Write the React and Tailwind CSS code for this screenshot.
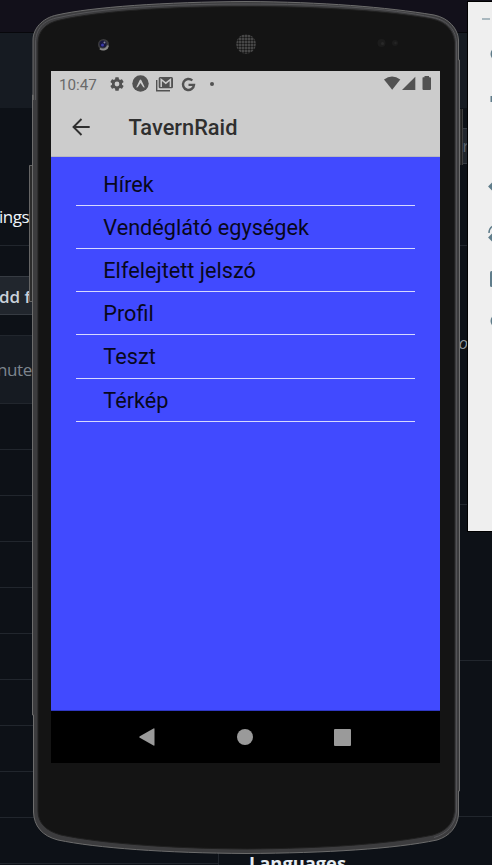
import React from "react";

const items = ["Hírek", "Vendéglátó egységek", "Elfelejtett jelszó", "Profil", "Teszt", "Térkép"];

function Backdrop() {
  return (
    <div className="flex h-[865px] flex-col bg-[#0d1117] font-['Noto_Sans',sans-serif]">
      <div className="h-[33px] shrink-0 border-b border-[#07070b] bg-[#12101a]" />
      <div className="h-[75px] shrink-0 bg-[#161b22]" />
      <div className="flex min-h-0 flex-1">
        <div className="flex w-[219px] shrink-0 flex-col border-r border-[#21262d]">
          <div className="flex h-[138px] shrink-0 items-end border-b border-[#21262d] pb-4">
            <span className="-ml-[1px] font-['Open_Sans',sans-serif] text-[17px] tracking-[-0.5px] leading-6 text-[#f0f6fc]">ings</span>
          </div>
          <div className="mt-[30px] h-[39px] shrink-0 border-y border-[#363b42] bg-[#21262d] pt-[8px]">
            <span className="-ml-[1px] block font-['Open_Sans',sans-serif] text-[17px] font-semibold leading-6 text-[#c9d1d9]">dd f</span>
          </div>
          <div className="mt-5 h-[69px] shrink-0 border-y border-[#21262d] bg-[#161b22] pt-[22px]">
            <span className="-ml-[3px] block font-['Open_Sans',sans-serif] text-[17px] tracking-[-0.4px] leading-6 text-[#7d858e]">nute</span>
          </div>
          {Array.from({ length: 10 }, (_, i) => (
            <div key={i} className="h-[46px] shrink-0 border-b border-[#21262d]" />
          ))}
        </div>
        <div className="flex flex-1 flex-col">
          <div className="h-[20px] shrink-0" />
          <div className="flex h-[36px] shrink-0 items-center justify-end border-y border-[#363b42] bg-[#21262d] pr-[23px] text-[16px] text-[#59616a]">r</div>
          <div className="h-[82px] shrink-0 border-b border-[#21262d]" />
          <div className="flex h-[259px] shrink-0 justify-end border-b border-[#21262d] pr-[24px] pt-[85px]">
            <span className="font-['Open_Sans',sans-serif] text-[17px] italic leading-6 text-[#8b949e]">o</span>
          </div>
          <div className="h-[156px] shrink-0 border-b border-[#21262d]" />
          <div className="h-[156px] shrink-0 border-b border-[#21262d]" />
          <div className="pl-[30px] pt-[34px] font-['Open_Sans',sans-serif] text-[18.3px] font-bold leading-6 text-[#e6edf3]">Languages</div>
        </div>
      </div>
    </div>
  );
}

function PhoneBody() {
  const outline =
    "M33 100V40C33 29 42 18 57 15C92 7 165 2 246 1.5C322 2 386 7 434 15C449 18 458 29 458.5 40V60H459.5V791H458.5V815C457 827 450 836 437 840C394 849 326 853 246 853.500C166 853 96 848 58 840C42 836 34 826 33.500 812V715H32.500V95H33Z";
  const face =
    "M38 100V43C38 32 45 23 60 20C100 11 170 6.500 246 6.500C322 6.500 390 11 432 19C447 22 454 32 454.500 43V811C453 824 446 831 433 835C390 844 324 848.500 246 849C168 848.500 99 843 61 835C46 831 38 823 38 811Z";
  return (
    <svg className="absolute inset-0" width="492" height="865" viewBox="0 0 492 865">
      <defs>
        <pattern id="mesh" width="3" height="3" patternUnits="userSpaceOnUse">
          <rect width="3" height="3" fill="#555" />
          <circle cx="1.500" cy="1.500" r="1.200" fill="#171717" />
        </pattern>
        <linearGradient id="key" x1="0" x2="1">
          <stop stopColor="#555" />
          <stop offset=".6" stopColor="#1c1c1c" />
          <stop offset="1" stopColor="#505050" />
        </linearGradient>
      </defs>
      <rect x="29" y="165" width="4" height="137" fill="#2b2b2b" />
      <path d="M33 165.500H29.500V301.500H33" fill="none" stroke="#656565" />
      <rect x="459" y="109" width="4" height="56" fill="url(#key)" />
      <path d={outline} fill="#3c3c3e" />
      <path d={outline} fill="none" stroke="#6c6c6c" strokeWidth="1" />
      <path d={face} fill="#141414" stroke="#202020" strokeWidth="1" />
      <path d="M35.500 100V42C36 29 43 20 59 17.500C100 8 170 4 246 4C322 4 390 8 433 17.500C449 21 456 31 456.500 43V812C455 825 447 834 434 837.500" fill="none" stroke="#555558" strokeWidth="1" />
      <circle cx="103.500" cy="44.500" r="5.500" fill="#3b3b3d" />
      <path d="M108 45.500a5 5 0 0 1-8 3" fill="none" stroke="#8a8a8a" strokeWidth="2" />
      <circle cx="103" cy="44" r="3.500" fill="#17173f" />
      <circle cx="102.500" cy="45" r="1.500" fill="#3a3aa8" />
      <circle cx="104.500" cy="42.500" r="1" fill="#889" />
      <circle cx="246" cy="44" r="9.800" fill="url(#mesh)" />
      <circle cx="381.500" cy="43" r="4" fill="#1c1c1c" />
      <circle cx="382.500" cy="43.500" r="1.500" fill="#292929" />
      <circle cx="395" cy="43" r="3" fill="#1c1c1c" />
      <circle cx="395.500" cy="43" r="1.200" fill="#252525" />
    </svg>
  );
}

function StatusBar() {
  return (
    <div className="flex h-[27px] items-center pl-[8px] pr-[8px] text-[#525252]">
      <span className="w-[51px] text-[15.2px] leading-[26px] text-[#696969]">10:47</span>
      <svg className="-mt-px" width="14" height="14" viewBox="2 2 20 20" fill="currentColor">
        <path d="M19.140 12.940c.04-.3.060-.61.060-.94s-.02-.64-.07-.94l2.030-1.580a.49.490 0 0 0 .12-.61l-1.920-3.320a.49.490 0 0 0-.59-.22l-2.390.96a7 7 0 0 0-1.620-.94l-.36-2.540A.48.480 0 0 0 13.920 2.400h-3.840a.48.480 0 0 0-.47.410l-.36 2.540a7 7 0 0 0-1.620.94l-2.390-.96a.48.480 0 0 0-.59.220L2.740 8.870a.48.480 0 0 0 .12.610l2.030 1.580a6 6 0 0 0 0 1.880l-2.030 1.580a.49.490 0 0 0-.12.610l1.920 3.320c.12.220.37.290.59.220l2.390-.96c.5.380 1.030.7 1.620.94l.36 2.540c.05.240.24.410.48.410h3.840c.24 0 .44-.17.470-.41l.36-2.540a7 7 0 0 0 1.620-.94l2.390.96c.22.080.47 0 .59-.22l1.920-3.320a.48.480 0 0 0-.12-.61ZM12 15.400a3.400 3.400 0 1 1 0-6.800 3.400 3.400 0 0 1 0 6.800Z" />
      </svg>
      <svg className="-mt-[2px] ml-[8px]" width="17" height="17" viewBox="0 0 17 17">
        <circle cx="8.500" cy="8.500" r="8.200" fill="currentColor" />
        <path d="M4.300 12.300 7.600 5.200Q8.500 3.700 9.400 5.200L12.700 12.300Q11.700 12.900 11 11.700L8.500 7.900 6 11.700Q5.300 12.900 4.300 12.300Z" fill="#ccc" />
      </svg>
      <svg className="-mt-px ml-[7px]" width="17" height="15" viewBox="0 0 17 15">
        <path d="M.7 3V13.800H14" fill="none" stroke="currentColor" strokeWidth="1.400" />
        <path d="M4 0H15.500Q17 0 17 1.500V9.700Q17 11.200 15.500 11.200H4Q2.700 11.200 2.700 9.700V1.500Q2.700 0 4 0Z" fill="currentColor" />
        <path d="M5.200 10V2.500L9.800 6.200 14.400 2.500V10" fill="none" stroke="#ccc" strokeWidth="1.500" />
      </svg>
      <svg className="-mt-px ml-[8px]" width="15" height="15" viewBox="0 0 15 15" fill="none" stroke="currentColor" strokeWidth="2.400">
        <path d="M11.300 3.500A5.500 5.500 0 1 0 13 7.900H7.500" />
      </svg>
      <span className="-mt-px ml-[14px] h-1 w-1 rounded-full bg-[#525252]" />
      <svg className="-mt-[3px] ml-auto" width="48" height="16" viewBox="0 0 48 16" fill="currentColor">
        <path d="M0 4.500Q8 -1.500 16.300 4.500L8.200 14.700Z" />
        <path d="M18 15H31.300V1.700Z" />
        <path d="M39 2.300H40.500V1H45V2.300H46Q47 2.300 47 3.300V14Q47 15 46 15H39.500Q38.500 15 38.500 14V3.300Q38.500 2.300 39 2.300Z" />
      </svg>
    </div>
  );
}

function Screen() {
  return (
    <div className="absolute left-[51px] top-[71px] flex h-[692px] w-[389px] flex-col bg-[#ccc] font-['Roboto',sans-serif]">
      <StatusBar />
      <div className="flex h-[59px] shrink-0 items-center border-b border-[#b8b8c0] pl-[21px]">
        <svg width="18" height="18" viewBox="0 0 18 18" fill="none" stroke="#303030" strokeWidth="1.900">
          <path d="M9.500 1 1.500 9 9.500 17M1.500 9H17.700" />
        </svg>
        <h1 className="ml-[38.5px] mt-[2px] text-[21.8px] font-medium leading-6 text-[#2f2f2f]">TavernRaid</h1>
      </div>
      <ul className="flex-1 border-b border-[#3038c4] bg-[#414aff] pl-[25px] pr-[25px] pt-[5.6px]">
        {items.map((item) => (
          <li key={item} className="h-[43.2px] border-b border-[#d7d9ff] pl-[27.3px] text-[21.7px] leading-[43.8px] text-[#08081c]">
            {item}
          </li>
        ))}
      </ul>
      <div className="flex h-[52px] shrink-0 items-center bg-black">
        <svg className="ml-[88px]" width="16" height="18" viewBox="0 0 16 18" fill="#9a9a9a">
          <path d="M15.500 1V17Q15.500 18 14.500 17.500L.8 9.800Q-.3 9 .8 8.200L14.500.5Q15.500 0 15.500 1Z" />
        </svg>
        <span className="ml-[82px] h-4 w-4 rounded-full bg-[#9a9a9a]" />
        <span className="ml-[81px] h-[17px] w-[17px] rounded-[1px] bg-[#9a9a9a]" />
      </div>
    </div>
  );
}

function EmulatorToolbar() {
  return (
    <div className="absolute left-[467px] top-[1px] h-[531px] w-[40px] border border-black bg-[#efefef]">
      <svg width="24" height="529" viewBox="468 2 24 529" fill="none" stroke="#607d8b" strokeWidth="2">
        <path d="M482 19H490" stroke="#a9b8bf" />
        <circle cx="497" cy="54" r="5.500" />
        <path d="M491.500 96V102" />
        <path d="M489.500 186.500 493 183V190Z" fill="#607d8b" />
        <path d="M489 233Q489 228 493 226" strokeWidth="1.500" />
        <path d="M489.500 237.500 492 235V240Z" fill="#607d8b" />
        <rect x="490" y="271" width="8" height="16" rx="1.500" fill="#607d8b" stroke="none" />
        <circle cx="497" cy="321" r="5.500" />
      </svg>
    </div>
  );
}

export default function App() {
  return (
    <div className="relative h-[865px] w-[492px] overflow-hidden">
      <Backdrop />
      <PhoneBody />
      <Screen />
      <EmulatorToolbar />
    </div>
  );
}
